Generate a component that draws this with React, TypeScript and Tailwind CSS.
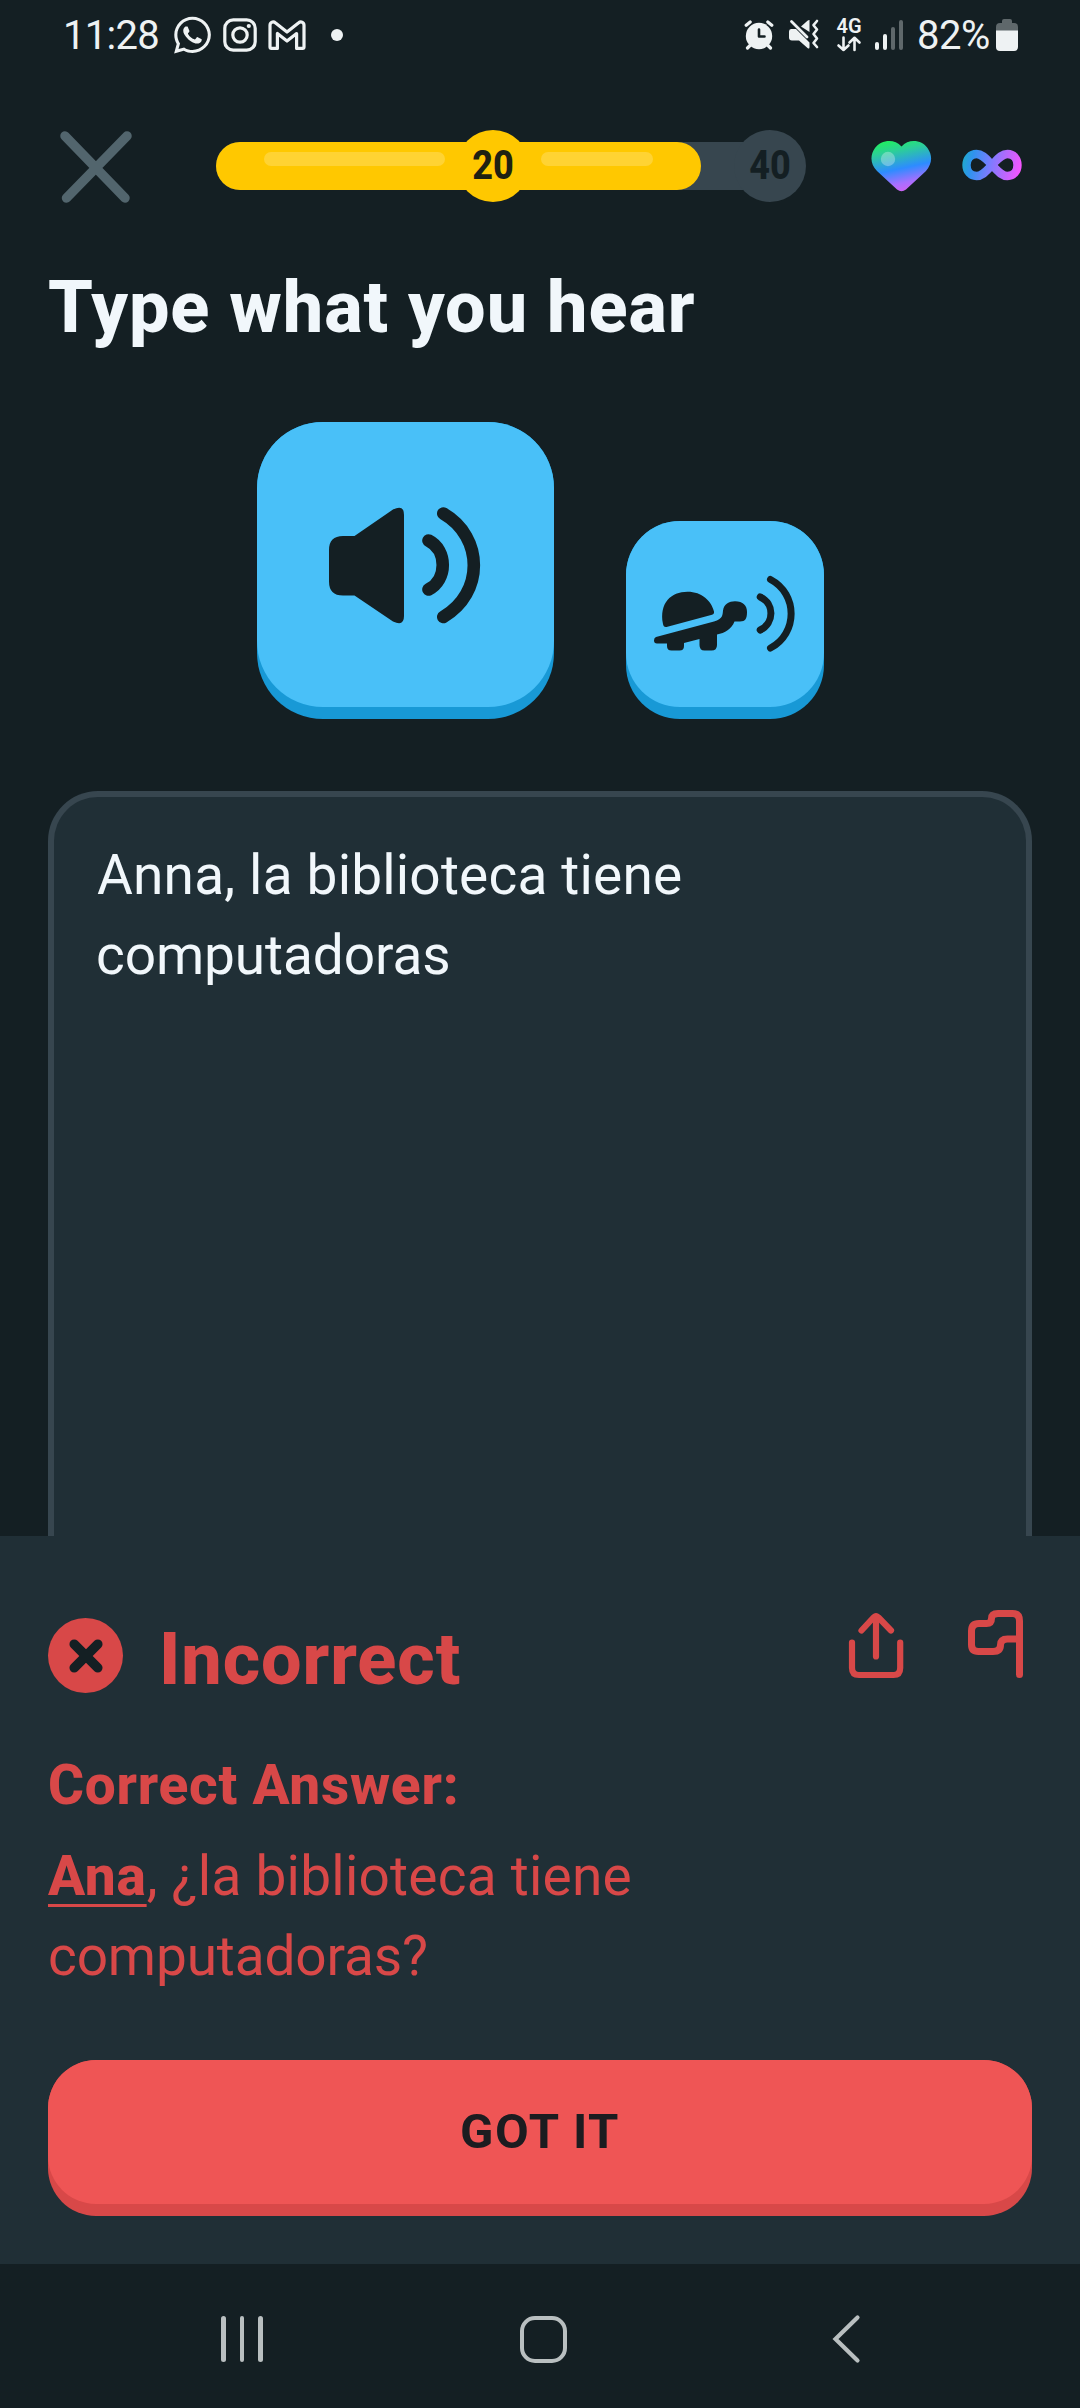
import { FaWhatsapp } from "react-icons/fa";

function StatusBar() {
  return (
    <div className="flex h-[70px] items-center justify-between pl-[63px] pr-[62px] text-[40px] leading-[70px] text-[#eef2f3]">
      <div className="flex h-full items-center">
        <span className="w-[111px] pt-0.5 tracking-[-0.7px]">11:28</span>
        <FaWhatsapp className="h-[42px] w-[37px]" />
        <svg className="ml-3 h-[34px] w-[34px]" viewBox="0 0 34 34" fill="none" stroke="currentColor" strokeWidth="3.2">
          <rect x="1.8" y="1.8" width="30.4" height="30.4" rx="8.5" />
          <circle cx="17" cy="17" r="7.2" />
          <circle cx="25.8" cy="8" r="2.1" fill="currentColor" stroke="none" />
        </svg>
        <svg className="ml-[11px] h-[30px] w-[38px]" viewBox="0 0 38 30" fill="none" stroke="currentColor" strokeWidth="3.2" strokeLinejoin="round">
          <path d="M2 5.2C2 2 5.2 1 7.6 3L19 12L30.400 3C32.800 1 36 2 36 5.200V27C36 28 35.500 28.400 34.600 28.400H28.600V13.500L19 21L9.400 13.500V28.400H3.400C2.500 28.400 2 28 2 27Z" />
        </svg>
        <span className="ml-[25px] h-3 w-3 rounded-full bg-current" />
      </div>
      <div className="flex h-full items-center">
        <svg className="h-[32px] w-[30px]" viewBox="0 0 30 32">
          <g stroke="currentColor" strokeWidth="3.2" strokeLinecap="round">
            <path d="M2.200 6.300L6.200 3M27.800 6.300L23.800 3M6 26.500L3.500 29M24 26.500L26.500 29" />
          </g>
          <circle cx="15" cy="17" r="13.200" fill="currentColor" />
          <path d="M15 10.500V17.500H20.500" fill="none" stroke="#141f23" strokeWidth="2.600" strokeLinecap="round" strokeLinejoin="round" />
        </svg>
        <svg className="ml-[14px] h-[32px] w-[32px]" viewBox="0 0 32 32">
          <path d="M21.500 1.500V13L13 7.500L19.500 1.700Q21.500 .5 21.500 1.500Z" fill="currentColor" />
          <path d="M3 10H8L21.500 23.500V28Q21.500 30.500 19.500 29L11 21.500H4Q1 21.500 1 18.500V12.500Q1 10 3 10Z" fill="currentColor" />
          <path d="M3.500 2.500L19 18" stroke="currentColor" strokeWidth="2.800" strokeLinecap="round" />
          <path d="M29 2L25.500 6.200L29 10.500L25.500 15L29 19.500L25.500 24L29 28" fill="none" stroke="currentColor" strokeWidth="2.600" strokeLinecap="round" strokeLinejoin="round" />
        </svg>
        <div className="ml-[15px] flex h-full w-[28px] flex-col items-center pt-[16px]">
          <span className="text-[20px] font-semibold leading-5">4G</span>
          <svg className="h-[16px] w-[26px]" viewBox="0 0 26 16" fill="none" stroke="currentColor" strokeWidth="2.600" strokeLinecap="round" strokeLinejoin="round">
            <path d="M7.500 1.500V14M2.500 9.500L7.500 14L12.500 9.500M18.500 14V1.800M13.500 6.500L18.500 1.800L23.500 6.500" />
          </svg>
        </div>
        <div className="ml-[12px] flex h-[30px] items-end gap-1">
          <span className="h-2 w-1 rounded-full bg-current" />
          <span className="h-4 w-1 rounded-full bg-current" />
          <span className="h-[23px] w-1 rounded-full bg-[#5f686b]" />
          <span className="h-[30px] w-1 rounded-full bg-[#5f686b]" />
        </div>
        <span className="ml-3.5 w-[79px] pt-0.5 tracking-[-0.5px]">82%</span>
        <svg className="h-[32px] w-[22px]" viewBox="0 0 22 32">
          <path d="M6 4V2Q6 0 8 0H14Q16 0 16 2V4H18Q22 4 22 8V12H0V8Q0 4 4 4Z" fill="#5f686b" />
          <path d="M0 11.500H22V28Q22 32 18 32H4Q0 32 0 28Z" fill="currentColor" />
        </svg>
      </div>
    </div>
  );
}

function ProgressBar() {
  return (
    <div className="relative ml-[84px] flex h-[72px] w-[590px] items-center text-[40px] font-extrabold text-[#141f23]">
      <div className="h-12 w-[560px] rounded-full bg-[#37464f]">
        <div className="flex h-full w-[485px] rounded-[24px] bg-[#ffc800] pl-12 pt-2.5">
          <span className="h-[14px] w-[181px] rounded-full bg-[#ffd333]" />
          <span className="ml-[96px] h-[14px] w-[112px] rounded-full bg-[#ffd333]" />
        </div>
      </div>
      <span className="absolute left-[241px] top-0 flex h-[72px] w-[72px] items-center justify-center rounded-full bg-[#ffc800] text-[#1e2112]">
        <span className="scale-x-90">20</span>
      </span>
      <span className="absolute right-0 top-0 flex h-[72px] w-[72px] items-center justify-center rounded-full bg-[#37464f]">
        <span className="scale-x-90">40</span>
      </span>
    </div>
  );
}

function Header() {
  return (
    <div className="mt-[60px] flex h-[72px] items-center pl-[60px]">
      <svg className="mt-0.5 h-[72px] w-[72px]" viewBox="0 0 72 72" stroke="#52656d" strokeWidth="9.500" strokeLinecap="round">
        <path d="M5 5L65 67M67 5L6.500 67" />
      </svg>
      <ProgressBar />
      <svg className="ml-[64px] h-[52px] w-[63px]" viewBox="0 0 63 52">
        <defs>
          <linearGradient id="heart" x1="0.22" y1="0" x2="0.48" y2="1">
            <stop offset="0" stopColor="#20f05e" />
            <stop offset="0.22" stopColor="#2cd096" />
            <stop offset="0.58" stopColor="#2d8cff" />
            <stop offset="0.85" stopColor="#a570ff" />
            <stop offset="1" stopColor="#c964f5" />
          </linearGradient>
        </defs>
        <path d="M31.500 6.500C39 -2 52 0 57.500 8C63 16 62 24 56 31L36 49.500Q31.500 53 27 49.500L7 31C0 24 0 15 5 8C11 0 24 -2 31.500 6.500Z" fill="url(#heart)" />
        <circle cx="18" cy="19" r="7.200" fill="#fff" opacity="0.3" />
      </svg>
      <svg className="-mt-0.5 ml-[29px] h-[32px] w-[60px]" viewBox="0 0 60 32" fill="none">
        <defs>
          <linearGradient id="inf" x1="0" y1="0" x2="60" y2="12" gradientUnits="userSpaceOnUse">
            <stop offset="0" stopColor="#1cb0c4" />
            <stop offset="0.2" stopColor="#2f93ee" />
            <stop offset="0.5" stopColor="#7c7cff" />
            <stop offset="0.75" stopColor="#b868fc" />
            <stop offset="1" stopColor="#f555ff" />
          </linearGradient>
        </defs>
        <path d="M30 16C24 10 20.500 5 14.500 5C8.500 5 4.500 9.800 4.500 16C4.500 22.200 8.500 27 14.500 27C20.500 27 24 22 30 16C36 10 39.500 5 45.500 5C51.500 5 55.500 9.800 55.500 16C55.500 22.200 51.500 27 45.500 27C39.500 27 36 22 30 16Z" stroke="url(#inf)" strokeWidth="8.400" />
      </svg>
    </div>
  );
}

function AudioButtons() {
  return (
    <div className="mt-[76px] flex h-[297px] items-end justify-center gap-[72px]">
      <div className="h-[297px] w-[297px] rounded-[66px] bg-[#1899d6]">
        <div className="h-[285px] rounded-[66px] bg-[#49c0f8]">
          <svg className="h-[285px] w-[297px]" viewBox="257 422 297 285" fill="none" stroke="#141f23" strokeLinecap="round" strokeWidth="12.600">
            <path d="M329 550Q329 536 343 536H354.500L393 509.500Q404 504 404 515V616Q404 627 393 621.500L354.500 595.500H343Q329 595.500 329 581.500Z" fill="#141f23" stroke="none" />
            <path d="M428.500 540.500C447.500 550 447.500 580 428.500 589.500M443.300 513.500C484 537 484 593.500 443.300 617" />
          </svg>
        </div>
      </div>
      <div className="h-[198px] w-[198px] rounded-[54px] bg-[#1899d6]">
        <div className="h-[186px] rounded-[54px] bg-[#49c0f8]">
          <svg className="h-[186px] w-[198px]" viewBox="626 521 198 186" fill="none" stroke="#141f23" strokeLinecap="round" strokeWidth="7">
            <g fill="#141f23" stroke="none">
              <path d="M666.500 627Q663.500 627.500 663 624C659 603 671 591.700 687.500 591.700C702 591.700 711.500 601 714 611.500Q714.500 614 712 614.800Z" />
              <path d="M656 637L714 621.500C723 619 722.500 615 723 610.500C724 604 729 601.300 735 601.300C743 601.300 747 605.500 747 612C747 618.500 745.500 621.500 740 621.500H734.500C731.500 629 725 633 717 634.500V645Q717 650.500 711.500 650.500H704.500Q699.500 650.500 699.500 645V639L684 643V646Q684 650.500 679.500 650.500H671.500Q667 650.500 667 646V643.500H657Q654 643.500 654 640.500Q654 637.600 656 637Z" />
            </g>
            <path d="M760.200 597C774.500 603.500 774.500 623 760.200 630M770.500 579.500C798 594 798 633.500 770.500 648" />
          </svg>
        </div>
      </div>
    </div>
  );
}

function AnswerBox() {
  return (
    <div className="mx-12 mt-[72px] h-[745px] rounded-t-[50px] border-6 border-b-0 border-[#37464f] bg-[#202f36] pl-[43px] pt-[38px] text-[55px] leading-20 text-[#f1f7fb]">
      <p className="tracking-[0.18px]">Anna, la biblioteca tiene</p>
      <p className="-ml-px tracking-[-0.1px]">computadoras</p>
    </div>
  );
}

function Feedback() {
  return (
    <div className="h-[728px] bg-[#202f36] px-12 pt-[74px] text-[55px] leading-20 text-[#d84848]">
      <div className="flex h-[90px] items-start">
        <div className="mt-2 flex h-[75px] w-[75px] items-center justify-center rounded-full bg-[#d84848]">
          <svg className="h-[34px] w-[34px]" viewBox="0 0 34 34" stroke="#141f23" strokeWidth="9.500" strokeLinecap="round">
            <path d="M5.200 5.200L28.800 28.800M28.800 5.200L5.200 28.800" />
          </svg>
        </div>
        <h2 className="ml-[36px] mt-[10px] text-[72px] font-extrabold leading-20 tracking-[0.9px]">Incorrect</h2>
        <svg className="ml-auto h-[72px] w-[60px]" viewBox="846 1610 60 72" fill="none" stroke="currentColor" strokeWidth="6.200" strokeLinecap="round" strokeLinejoin="round">
          <path d="M852 1642.500V1668Q852 1675 859 1675H893.500Q900.200 1675 900.200 1668V1642.500M876 1616V1656.500M861.500 1630.500L873.500 1617.500Q876 1614.500 878.500 1617.500L891 1630.500" />
        </svg>
        <svg className="ml-[59px] h-[72px] w-[67px]" viewBox="965 1610 67 72" fill="none" stroke="currentColor" strokeWidth="7" strokeLinecap="round" strokeLinejoin="round">
          <path d="M1019.500 1674.500V1621Q1019.500 1613.500 1012.500 1613.500H998Q991.500 1613.500 991.500 1618.500Q991.500 1623.500 986.500 1623.500H979Q971.500 1623.500 971.500 1631V1644.500Q971.500 1651.500 978.500 1651.500H993Q1000.500 1651.500 1000.500 1645Q1000.500 1639 1007.500 1639H1019.500" />
        </svg>
      </div>
      <h3 className="mt-[45px] font-extrabold tracking-[0.75px]">Correct Answer:</h3>
      <p className="mt-[11px] tracking-[0.23px]">
        <span className="font-extrabold tracking-[0.75px] underline decoration-3 underline-offset-[9px]">Ana</span>, ¿la biblioteca tiene
      </p>
      <p className="tracking-[-0.15px]">computadoras?</p>
      <div className="mt-[64px] h-[156px] rounded-[48px] bg-[#d84848]">
        <button className="block h-[144px] w-full rounded-[48px] bg-[#ef5555] text-[49px] font-bold tracking-[1.5px] text-[#1c1c20]">
          GOT IT
        </button>
      </div>
    </div>
  );
}

function NavBar() {
  return (
    <div className="flex h-36 items-center pl-[221px] text-[#b9bfc0]">
      <div className="mt-1.5 flex h-[46px] gap-[14px]">
        <span className="w-[4.500px] rounded-full bg-current" />
        <span className="w-[4.500px] rounded-full bg-current" />
        <span className="w-[4.500px] rounded-full bg-current" />
      </div>
      <div className="ml-[257px] mt-1.5 h-[47px] w-[47px] rounded-[15px] border-[4.500px] border-current" />
      <svg className="ml-[265px] mt-1.5 h-[50px] w-[30px]" viewBox="0 0 30 50" fill="none" stroke="currentColor" strokeWidth="4.200" strokeLinecap="round">
        <path d="M25.500 3.500L3.500 25L25.500 46.500" />
      </svg>
    </div>
  );
}

export default function App() {
  return (
    <div className="h-[2408px] w-[1080px] overflow-hidden bg-[#141f23] font-[Roboto,sans-serif]">
      <StatusBar />
      <Header />
      <h1 className="ml-12 mt-[66px] h-[78px] text-[72px] font-extrabold leading-20 tracking-[0.95px] text-[#f1f7fb]">Type what you hear</h1>
      <AudioButtons />
      <AnswerBox />
      <Feedback />
      <NavBar />
    </div>
  );
}
